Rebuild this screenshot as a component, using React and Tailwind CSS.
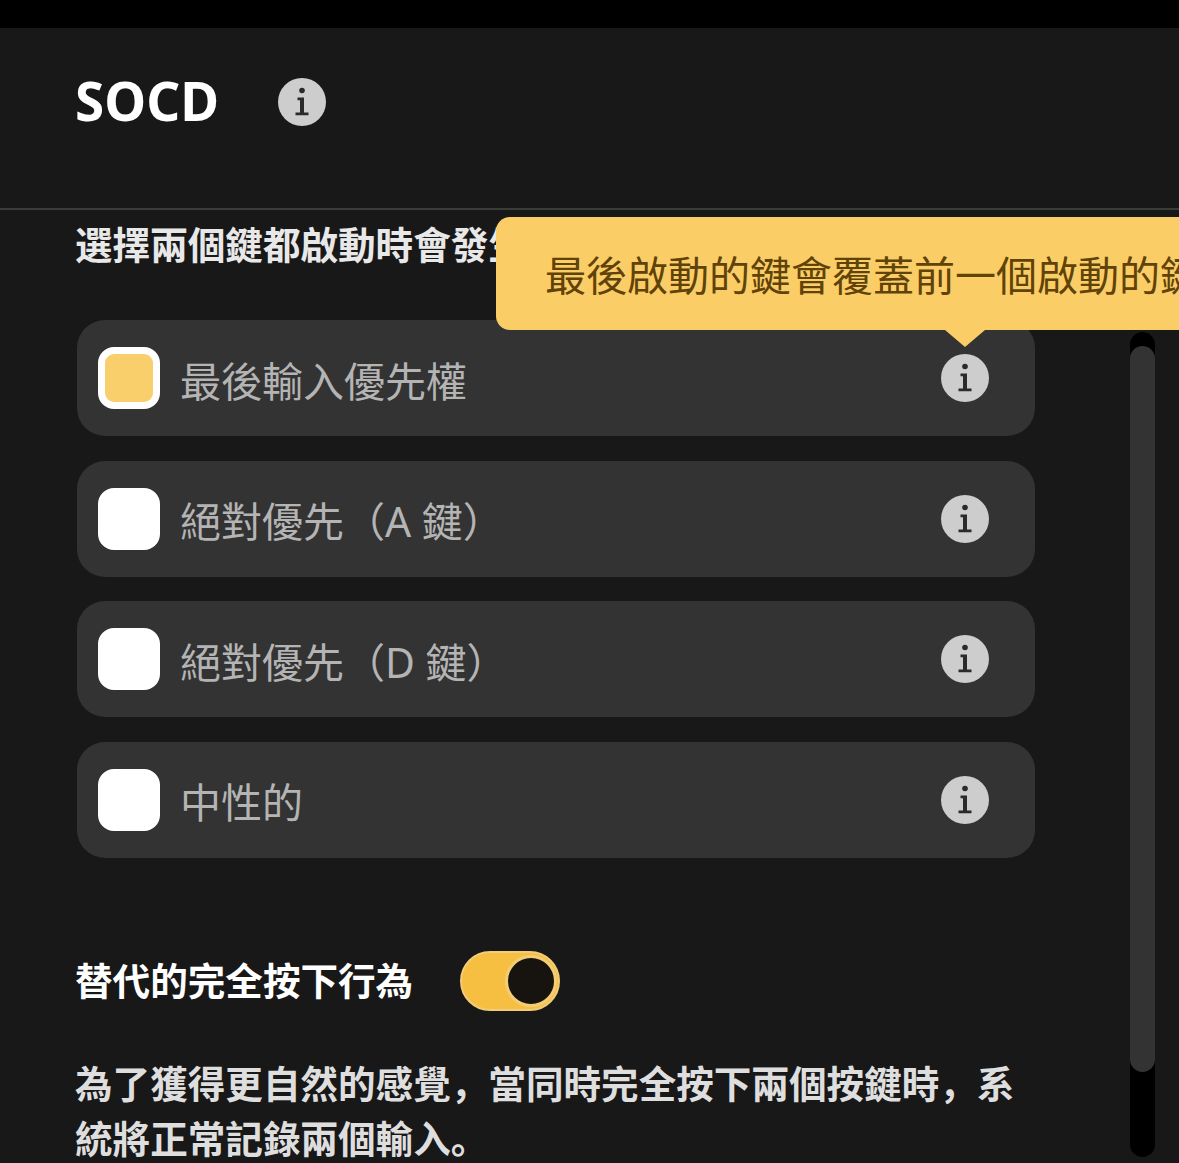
import React from "react";

const cjk = "font-['Noto_Sans_CJK_SC','Noto_Sans_CJK_TC',sans-serif]";

const options = [
  { label: "最後輸入優先權", checked: true },
  { label: "絕對優先（A 鍵）", checked: false },
  { label: "絕對優先（D 鍵）", checked: false },
  { label: "中性的", checked: false },
];

const InfoIcon = ({ size = 48 }) => (
  <svg width={size} height={size} viewBox="0 0 48 48" className="shrink-0">
    <circle cx="24" cy="24" r="24" fill="#cdcdcd" />
    <circle cx="24" cy="12.5" r="2.8" fill="#2a2a2a" />
    <path d="M19.5 19.5h6.5v15h4.5v2.8h-13v-2.8h4.5V22.3h-2.5z" fill="#2a2a2a" />
  </svg>
);

const OptionRow = ({ label, checked }) => (
  <div className="flex h-[116px] items-center rounded-[28px] bg-[#333333] pl-[21px] pr-[46px]">
    <div
      className={
        checked
          ? "h-[62px] w-[62px] shrink-0 rounded-[16px] border-[7px] border-white bg-[#f8cf6a]"
          : "h-[62px] w-[62px] shrink-0 rounded-[16px] border-[7px] border-white bg-white"
      }
    />
    <span className="ml-[20px] flex-1 pt-[6px] font-['Noto_Sans','Noto_Sans_CJK_SC',sans-serif] text-[41px] leading-none text-[#b4b4b4]">
      {label}
    </span>
    <InfoIcon />
  </div>
);

export default function App() {
  return (
    <div className={`relative flex h-[1163px] w-[1179px] flex-col overflow-hidden bg-[#181818] ${cjk}`}>
      <div className="h-[28px] shrink-0 bg-black" />

      <div className="flex h-[182px] shrink-0 items-start border-b-2 border-[#3a3c3a] pl-[75px] pt-[43px]">
        <h1 className="font-['Noto_Sans',sans-serif] text-[53px] font-bold leading-[60px] text-white">SOCD</h1>
        <div className="ml-[59px] mt-[7px]">
          <InfoIcon />
        </div>
      </div>

      <div className="flex flex-1 overflow-hidden">
        <div className="w-[1035px] shrink-0 pl-[75px]">
          <p className="mt-[5px] whitespace-nowrap text-[37.6px] font-bold leading-[56px] text-[#e8e8e8]">
            選擇兩個鍵都啟動時會發生什麼
          </p>

          <div className="ml-[2px] mt-[49px] flex flex-col gap-[24.6px]">
            {options.map((o) => (
              <OptionRow key={o.label} label={o.label} checked={o.checked} />
            ))}
          </div>

          <div className="mt-[93px] flex items-center">
            <span className="mb-[5px] text-[37.6px] font-bold leading-[56px] text-white">替代的完全按下行為</span>
            <div className="ml-[47px] flex h-[60px] w-[100px] items-center justify-end rounded-full border-[2px] border-[#f3cd76] bg-[#f6bf42] pr-[1px]">
              <div className="h-[52px] w-[52px] rounded-full border-[3px] border-[#f3cd76] bg-[#17130f]" />
            </div>
          </div>

          <p className="mt-[42px] w-[960px] text-[37.6px] font-bold leading-[55px] text-[#dedede]">
            為了獲得更自然的感覺，當同時完全按下兩個按鍵時，系統將正常記錄兩個輸入。
          </p>
        </div>

        <div className="ml-[95px] mt-[122px] h-[825px] w-[25px] shrink-0 rounded-full bg-black pt-[14px]">
          <div className="h-[726px] rounded-full bg-[#333333]" />
        </div>
      </div>

      {/* tooltip over the first row */}
      <div className="absolute left-[496px] top-[217px] flex h-[113px] w-[760px] items-center rounded-[14px] bg-[#fbcd66] pl-[49px]">
        <span className="whitespace-nowrap text-[41px] leading-none text-[#5f4308]">
          最後啟動的鍵會覆蓋前一個啟動的鍵
        </span>
        <div className="absolute left-[449px] top-full h-0 w-0 border-x-[20px] border-t-[17px] border-x-transparent border-t-[#fbcd66]" />
      </div>
    </div>
  );
}
